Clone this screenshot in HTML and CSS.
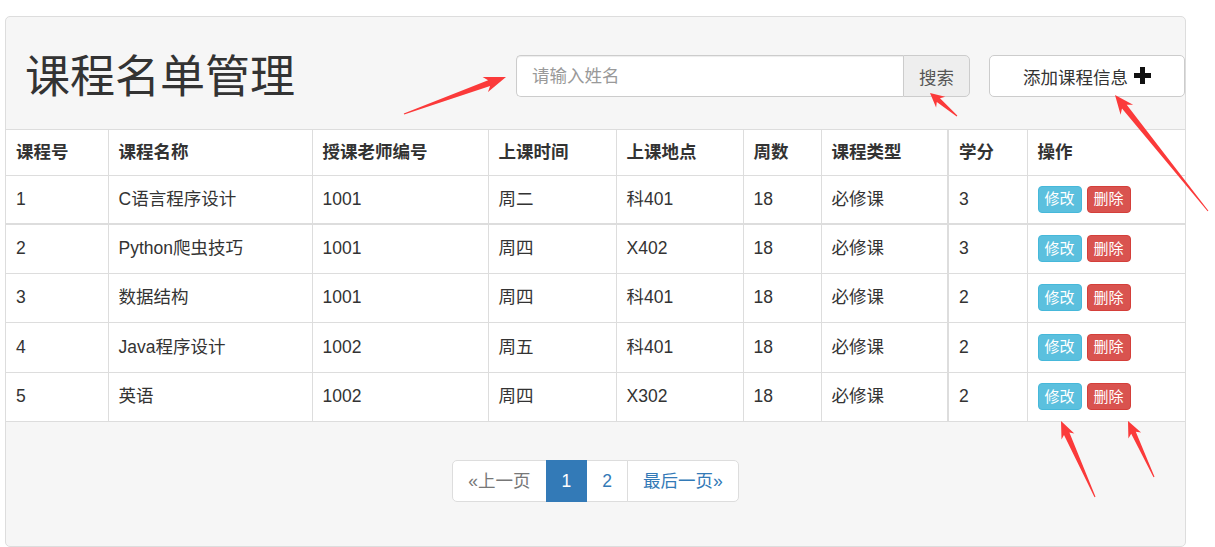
FILE: index.html
```html
<!DOCTYPE html>
<html lang="zh-CN">
<head>
<meta charset="utf-8">
<title>课程名单管理</title>
<link rel="stylesheet" href="styles.css">
</head>
<body>
<div class="panel">
  <div class="panel-head">
    <h1 class="title">课程名单管理</h1>
    <div class="search-group">
      <input class="search-input" type="text" placeholder="请输入姓名">
      <button class="search-btn" type="button">搜索</button>
    </div>
    <button class="add-btn" type="button">添加课程信息<svg class="plus" viewBox="0 0 17 17" width="17" height="17"><path d="M6 0h5v6h6v5h-6v6h-5v-6h-6v-5h6z" fill="#111"/></svg></button>
  </div>
  <table class="course-table">
    <colgroup>
      <col style="width:102px"><col style="width:204px"><col style="width:176px"><col style="width:128px"><col style="width:127px"><col style="width:78px"><col style="width:127px"><col style="width:79px"><col style="width:158px">
    </colgroup>
    <thead>
      <tr><th>课程号</th><th>课程名称</th><th>授课老师编号</th><th>上课时间</th><th>上课地点</th><th>周数</th><th>课程类型</th><th class="credit">学分</th><th>操作</th></tr>
    </thead>
    <tbody>
      <tr class="first"><td>1</td><td>C语言程序设计</td><td>1001</td><td>周二</td><td>科401</td><td>18</td><td>必修课</td><td class="credit">3</td><td><div class="ops"><button class="btn-xs info">修改</button><button class="btn-xs danger">删除</button></div></td></tr>
      <tr><td>2</td><td>Python爬虫技巧</td><td>1001</td><td>周四</td><td>X402</td><td>18</td><td>必修课</td><td class="credit">3</td><td><div class="ops"><button class="btn-xs info">修改</button><button class="btn-xs danger">删除</button></div></td></tr>
      <tr><td>3</td><td>数据结构</td><td>1001</td><td>周四</td><td>科401</td><td>18</td><td>必修课</td><td class="credit">2</td><td><div class="ops"><button class="btn-xs info">修改</button><button class="btn-xs danger">删除</button></div></td></tr>
      <tr><td>4</td><td>Java程序设计</td><td>1002</td><td>周五</td><td>科401</td><td>18</td><td>必修课</td><td class="credit">2</td><td><div class="ops"><button class="btn-xs info">修改</button><button class="btn-xs danger">删除</button></div></td></tr>
      <tr><td>5</td><td>英语</td><td>1002</td><td>周四</td><td>X302</td><td>18</td><td>必修课</td><td class="credit">2</td><td><div class="ops"><button class="btn-xs info">修改</button><button class="btn-xs danger">删除</button></div></td></tr>
    </tbody>
  </table>
  <div class="pager-wrap">
    <ul class="pagination">
      <li class="disabled"><span>«上一页</span></li>
      <li class="active"><span>1</span></li>
      <li><span>2</span></li>
      <li><span>最后一页»</span></li>
    </ul>
  </div>
</div>
<svg class="arrows" width="1215" height="547" viewBox="0 0 1215 547">
  <g fill="#fb3a3a">
    <polygon points="404.2,114.5 490.1,85.9 488.0,92.0 506,77 482.6,77.0 488.1,80.3 403.8,113.5"/>
    <polygon points="957.3,115.6 940.0,98.2 945.2,96.7 930,93 936.1,107.4 936.8,102.0 956.7,116.4"/>
    <polygon points="1208.4,210.7 1126.7,104.8 1133.1,104.8 1115,95 1120.6,114.8 1122.0,108.6 1207.6,211.3"/>
    <polygon points="1095.5,496.8 1069.4,432.6 1074.3,433.6 1061,421 1061.5,439.4 1064.0,435.0 1094.5,497.2"/>
    <polygon points="1154.5,476.8 1135.8,431.7 1141.1,432.6 1128,421 1128.4,438.5 1131.2,433.8 1153.5,477.2"/>
  </g>
</svg>
</body>
</html>
```

FILE: styles.css
```css
* { box-sizing: border-box; }
html, body { margin: 0; padding: 0; background: #fff; }
body {
  position: relative;
  width: 1215px;
  height: 547px;
  overflow: hidden;
  font-family: "Liberation Sans", "Noto Sans CJK SC", sans-serif;
  font-size: 17.5px;
  color: #333;
}
.panel {
  margin: 16px 0 0 5px;
  width: 1181px;
  height: 531px;
  background: #f6f6f6;
  border: 1px solid #ddd;
  border-radius: 5px;
}
.panel-head {
  display: flex;
  align-items: flex-start;
  height: 112px;
}
.title {
  flex: 1;
  margin: 36px 0 0 19px;
  font-size: 45px;
  line-height: 50px;
  font-weight: normal;
  color: #333;
}
.search-group {
  display: flex;
  width: 454px;
  height: 42px;
  margin: 38px 19px 0 0;
}
.search-input {
  width: 387px;
  height: 42px;
  padding: 0 15px;
  border: 1px solid #ccc;
  border-right: none;
  border-radius: 5px 0 0 5px;
  background: #fff;
  font: inherit;
  color: #555;
  box-shadow: inset 0 1px 1px rgba(0,0,0,.075);
  outline: none;
}
.search-input::placeholder { color: #999; }
.search-btn {
  width: 67px;
  height: 42px;
  padding: 0;
  border: 1px solid #ccc;
  border-radius: 0 5px 5px 0;
  background: #eee;
  font: inherit;
  color: #555;
}
.add-btn {
  display: flex;
  align-items: center;
  justify-content: center;
  gap: 6px;
  width: 196px;
  height: 42px;
  margin-top: 38px;
  padding: 0;
  border: 1px solid #ccc;
  border-radius: 5px;
  background: #fff;
  font: inherit;
  color: #333;
}
.plus { display: block; margin-top: -1px; }
.course-table {
  width: 1179px;
  table-layout: fixed;
  border-collapse: collapse;
  background: #fff;
}
.course-table th,
.course-table td {
  border: 1px solid #ddd;
  padding: 0 10px;
  text-align: left;
  vertical-align: middle;
  white-space: nowrap;
  line-height: 25px;
}
.course-table th:first-child,
.course-table td:first-child { border-left: none; }
.course-table th:last-child,
.course-table td:last-child { border-right: none; }
.course-table th {
  height: 46px;
  font-weight: bold;
}
.course-table td { height: 49.4px; }
.course-table tr.first td { height: 48.4px; border-bottom-width: 2px; }
.course-table .credit { border-left-width: 2px; }
.ops { display: flex; gap: 5px; }
.btn-xs {
  height: 27px;
  padding: 0 6px;
  border: 1px solid transparent;
  border-radius: 4px;
  font: inherit;
  font-size: 15px;
  line-height: 24px;
  color: #fff;
}
.btn-xs.info { background: #5bc0de; border-color: #46b8da; }
.btn-xs.danger { background: #d9534f; border-color: #d43f3a; }
.pager-wrap {
  display: flex;
  justify-content: center;
  padding-top: 38px;
}
.pagination {
  display: flex;
  margin: 0;
  padding: 0;
  list-style: none;
}
.pagination li span {
  display: block;
  height: 42px;
  padding: 0 15px;
  line-height: 40px;
  border: 1px solid #ddd;
  margin-left: -1px;
  background: #fff;
  color: #337ab7;
}
.pagination li:first-child span { margin-left: 0; border-radius: 5px 0 0 5px; }
.pagination li:last-child span { border-radius: 0 5px 5px 0; }
.pagination li.disabled span { color: #777; }
.pagination li.active span { background: #337ab7; border-color: #337ab7; color: #fff; position: relative; z-index: 1; }
.arrows {
  position: absolute;
  left: 0;
  top: 0;
  pointer-events: none;
}
```
